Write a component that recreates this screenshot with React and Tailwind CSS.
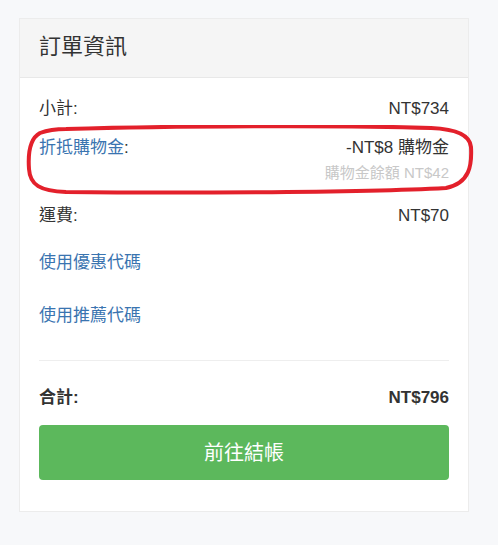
import React from 'react';

const font = { fontFamily: '"Liberation Sans", "Noto Sans CJK TC", sans-serif' };

const Row = ({ label, value, className = '' }) => (
  <div className={`flex items-center justify-between text-[17px] leading-6 text-[#333] ${className}`}>
    <span>{label}</span>
    <span>{value}</span>
  </div>
);

export default function App() {
  return (
    <div className="min-h-[545px] bg-[#f7f8fa] pt-[18px] pl-[19px]" style={font}>
      <div className="relative w-[450px] border border-[#ececec] bg-white">
        <div className="h-[59px] border-b border-[#e8e8e8] bg-[#f5f5f5] px-[19px] pt-[14px] text-[22px] leading-7 text-[#333]">
          訂單資訊
        </div>

        <div className="px-[19px] pt-[19px] pb-[31px]">
          <Row label="小計:" value="NT$734" />

          <div className="mt-[15px]">
            <div className="flex items-center justify-between text-[17px] leading-6 text-[#333]">
              <span>
                <span className="text-[#3a74b0]">折抵購物金</span>:
              </span>
              <span>-NT$8 購物金</span>
            </div>
            <div className="mt-[3px] text-right text-[15px] leading-5 text-[#c8c8c8]">購物金餘額 NT$42</div>
          </div>

          <Row label="運費:" value="NT$70" className="mt-[21px]" />

          <div className="mt-[23px] text-[17px] leading-6 text-[#3a74b0]">使用優惠代碼</div>
          <div className="mt-[29px] text-[17px] leading-6 text-[#3a74b0]">使用推薦代碼</div>

          <div className="mt-[32px] h-px bg-[#eeeeee]" />

          <Row label="合計:" value="NT$796" className="mt-[25px] font-bold" />

          <button className="mt-[15px] flex h-[55px] w-full items-center justify-center rounded-[4px] bg-[#5cb85c] text-[20px] text-white">
            前往結帳
          </button>
        </div>

        <svg className="pointer-events-none absolute left-[6px] top-[106px]" width="448" height="70" viewBox="0 0 448 70">
          <path
            d="M40 4 C140 1 320 0 405 3 C430 4 444 10 445 22 C446 40 444 58 420 63 C330 68 130 68 40 67 C14 66 4 60 3 44 C2 30 3 14 14 8 C22 5 30 4 40 4 Z"
            fill="none"
            stroke="#e3202b"
            strokeWidth="4"
          />
        </svg>
      </div>
    </div>
  );
}
